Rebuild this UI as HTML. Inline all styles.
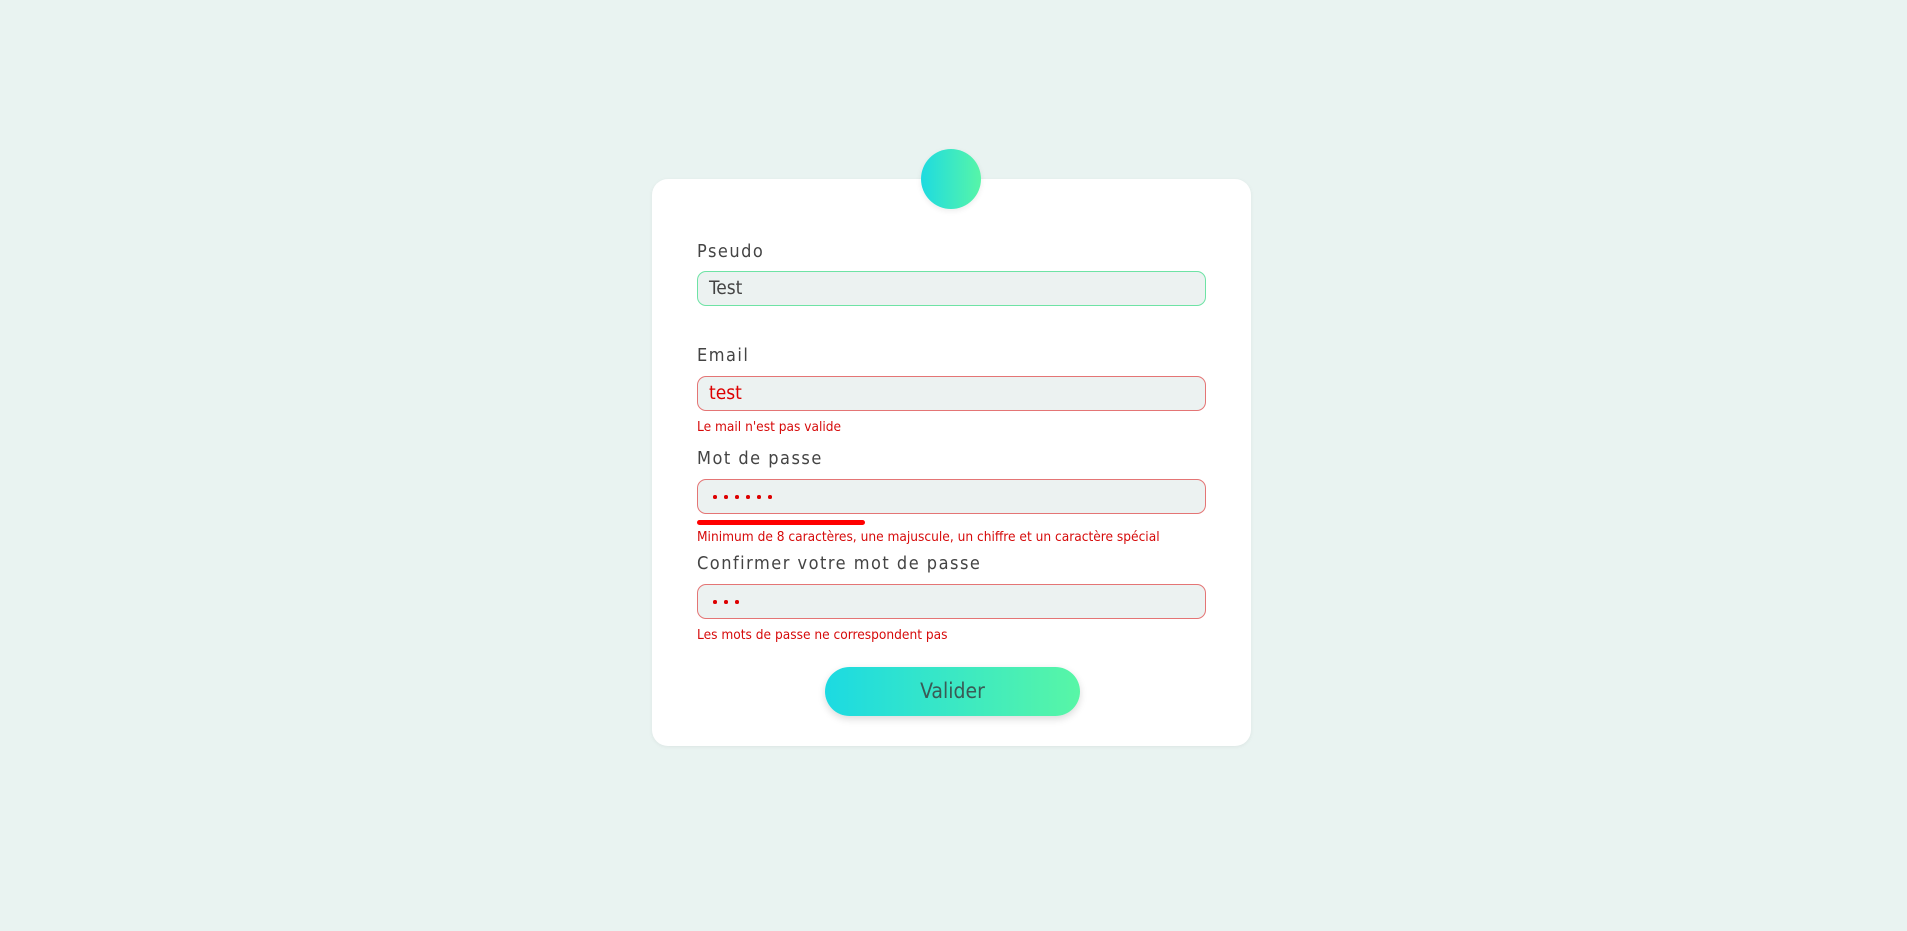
<!DOCTYPE html>
<html><head><meta charset="utf-8"><style>
html,body{margin:0;padding:0;}
body{width:1907px;height:931px;background:#e9f3f1;position:relative;overflow:hidden;font-family:"DejaVu Sans Condensed","Liberation Sans",sans-serif;}
.card{position:absolute;left:652px;top:179px;width:599px;height:567px;background:#fff;border-radius:16px;box-shadow:0 1px 4px rgba(0,0,0,0.06);}
.dot{position:absolute;left:921px;top:149px;width:60px;height:60px;border-radius:50%;background:linear-gradient(90deg,#1edbe0,#57f5a8);box-shadow:0 2px 6px rgba(0,0,0,0.08);}
.lbl{position:absolute;left:697px;font-size:18px;color:#444;letter-spacing:1.5px;}
.inp{position:absolute;left:697px;width:507px;height:33px;border:1px solid #e47575;border-radius:9px;background:#ecf2f1;}
.inp span{position:absolute;left:11px;top:5px;font-size:19px;}
.err{position:absolute;left:697px;font-size:13.6px;color:#d60a0a;}
.dots{position:absolute;left:15px;top:15px;height:4px;display:flex;}
.dots i{display:block;width:3.5px;height:3.5px;border-radius:50%;background:#d00;margin-right:7.5px;}
.btn{position:absolute;left:825px;top:667px;width:255px;height:49px;border-radius:25px;background:linear-gradient(90deg,#1cdae2,#58f6a6);box-shadow:0 3px 8px rgba(0,0,0,0.15);text-align:center;line-height:49px;font-size:21px;color:#3a5a55;}
</style></head><body>
<div class="card"></div>
<div class="dot"></div>

<div class="lbl" style="top:241px">Pseudo</div>
<div class="inp" style="top:271px;border-color:#6ee3a5"><span style="color:#444">Test</span></div>

<div class="lbl" style="top:345px">Email</div>
<div class="inp" style="top:376px"><span style="color:#d00">test</span></div>
<div class="err" style="top:419px">Le mail n'est pas valide</div>

<div class="lbl" style="top:448px">Mot de passe</div>
<div class="inp" style="top:479px"><div class="dots"><i></i><i></i><i></i><i></i><i></i><i></i></div></div>
<div style="position:absolute;left:697px;top:520px;width:168px;height:5px;border-radius:3px;background:#f00"></div>
<div class="err" style="top:529px">Minimum de 8 caractères, une majuscule, un chiffre et un caractère spécial</div>

<div class="lbl" style="top:553px">Confirmer votre mot de passe</div>
<div class="inp" style="top:584px"><div class="dots"><i></i><i></i><i></i></div></div>
<div class="err" style="top:627px">Les mots de passe ne correspondent pas</div>

<div class="btn">Valider</div>
</body></html>
